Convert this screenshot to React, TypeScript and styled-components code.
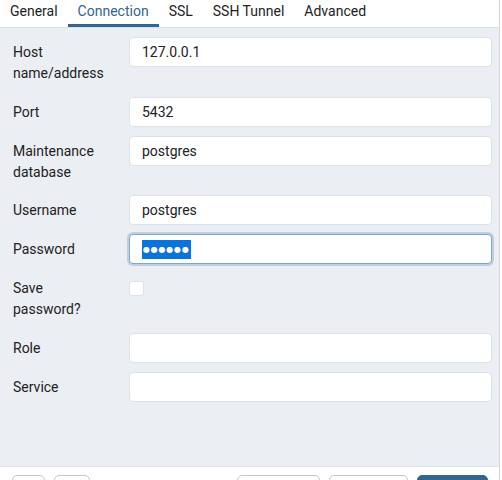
import React from "react";
import styled, { createGlobalStyle } from "styled-components";

const Global = createGlobalStyle`
  html, body { margin: 0; padding: 0; background: #ffffff; }
  body { font-family: Roboto, "Liberation Sans", sans-serif; color: #222222; }
  * { box-sizing: border-box; }
`;

const Dialog = styled.div`
  width: 500px;
  height: 480px;
  overflow: hidden;
  display: flex;
  flex-direction: column;
  border-right: 1px solid #d3d7dd;
  background: #ffffff;
`;

const TabBar = styled.div`
  display: flex;
  height: 28px;
  border-bottom: 1px solid #dde0e6;
  background: #ffffff;
`;

const Tab = styled.div<{ $active?: boolean }>`
  padding: 1px 10px 2px;
  height: 27px;
  font-size: 14px;
  line-height: 21px;
  color: ${(p) => (p.$active ? "#326690" : "#222222")};
  border-bottom: 3px solid ${(p) => (p.$active ? "#326690" : "transparent")};
  white-space: nowrap;
`;

const Form = styled.div`
  height: 439px;
  flex-shrink: 0;
  background: #ebeef3;
  border-bottom: 1px solid #dde0e6;
  padding: 9px 7px 0 13px;
  display: flex;
  flex-direction: column;
  gap: 9px;
`;

const Row = styled.div`
  display: grid;
  grid-template-columns: 116px 1fr;
  align-items: start;
  min-height: 30px;
`;

const Label = styled.div`
  font-size: 14px;
  line-height: 21px;
  padding: 5px 0 3.5px;
  color: #222222;
`;

const Field = styled.div<{ $focused?: boolean }>`
  height: 30px;
  background: #ffffff;
  border: 1px solid ${(p) => (p.$focused ? "#7fa8d1" : "#dde0e6")};
  border-radius: 4px;
  box-shadow: ${(p) => (p.$focused ? "0 0 0 2px #c3cfdc" : "none")};
  padding: 0 12px;
  display: flex;
  align-items: center;
  font-size: 14px;
  color: #222222;
`;

const Selection = styled.span`
  display: inline-flex;
  align-items: center;
  height: 19px;
  padding: 0 1px;
  background: #0b74d6;
  color: #ffffff;
  font-family: "DejaVu Sans", sans-serif;
  font-size: 8px;
  letter-spacing: 0.8px;
`;

const Check = styled.div`
  width: 15px;
  height: 15px;
  margin-top: 8px;
  background: #ffffff;
  border: 1px solid #dde0e6;
  border-radius: 3px;
`;

const Footer = styled.div`
  display: flex;
  align-items: flex-start;
  padding: 8px 11px 0 12px;
  gap: 9px;
  background: #ffffff;
  flex: 1;
`;

const Spacer = styled.div`
  flex: 1;
`;

const Button = styled.button<{ $w: number; $primary?: boolean }>`
  width: ${(p) => p.$w}px;
  height: 32px;
  flex-shrink: 0;
  padding: 0;
  border-radius: 5px;
  border: 1px solid ${(p) => (p.$primary ? "#326690" : "#c5c8cf")};
  background: ${(p) => (p.$primary ? "#326690" : "#ffffff")};
`;

const tabs = ["General", "Connection", "SSL", "SSH Tunnel", "Advanced"];

export default function App() {
  return (
    <>
      <Global />
      <Dialog>
        <TabBar>
          {tabs.map((t) => (
            <Tab key={t} $active={t === "Connection"}>
              {t}
            </Tab>
          ))}
        </TabBar>
        <Form>
          <Row>
            <Label>
              Host
              <br />
              name/address
            </Label>
            <Field>127.0.0.1</Field>
          </Row>
          <Row>
            <Label>Port</Label>
            <Field>5432</Field>
          </Row>
          <Row>
            <Label>
              Maintenance
              <br />
              database
            </Label>
            <Field>postgres</Field>
          </Row>
          <Row>
            <Label>Username</Label>
            <Field>postgres</Field>
          </Row>
          <Row>
            <Label>Password</Label>
            <Field $focused>
              <Selection>●●●●●●</Selection>
            </Field>
          </Row>
          <Row>
            <Label>
              Save
              <br />
              password?
            </Label>
            <Check />
          </Row>
          <Row>
            <Label>Role</Label>
            <Field />
          </Row>
          <Row>
            <Label>Service</Label>
            <Field />
          </Row>
        </Form>
        <Footer>
          <Button $w={33} aria-label="Info" />
          <Button $w={36} aria-label="Help" />
          <Spacer />
          <Button $w={83} aria-label="Close" />
          <Button $w={79} aria-label="Reset" />
          <Button $w={71} $primary aria-label="Save" />
        </Footer>
      </Dialog>
    </>
  );
}
